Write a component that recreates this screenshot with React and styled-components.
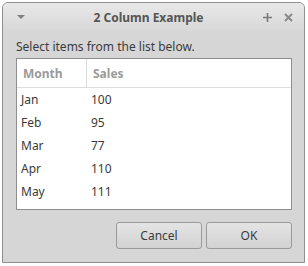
import React from 'react';
import styled, { createGlobalStyle } from 'styled-components';

const GlobalStyle = createGlobalStyle`
  html, body {
    margin: 0;
    padding: 0;
    background: #ffffff;
  }
  body {
    font-family: "Noto Sans", "Open Sans", "DejaVu Sans", sans-serif;
    font-size: 12px;
  }
`

const Page = styled.div`
  width: 308px;
  height: 266px;
  padding: 2px 3px 3px 2px;
  box-sizing: border-box;
`

const Window = styled.div`
  height: 100%;
  box-sizing: border-box;
  border: 1px solid #8f8f8f;
  border-radius: 6px 6px 0 0;
  background: #d6d6d6;
  display: flex;
  flex-direction: column;
  overflow: hidden;
`

const TitleBar = styled.div`
  height: 28px;
  flex-shrink: 0;
  display: grid;
  grid-template-columns: 40px 1fr 50px;
  align-items: center;
  background: linear-gradient(#e8e8e8, #d8d8d8);
`

const Title = styled.div`
  text-align: center;
  font-weight: bold;
  color: #555555;
  font-size: 12px;
`

const MenuArrow = styled.div`
  justify-self: start;
  margin-left: 14px;
  width: 0;
  height: 0;
  border-left: 4px solid transparent;
  border-right: 4px solid transparent;
  border-top: 4px solid #808080;
`

const Controls = styled.div`
  display: flex;
  justify-content: flex-end;
  gap: 12px;
  padding-right: 11px;
  color: #7a7a7a;
`

const Body = styled.div`
  flex: 1;
  display: flex;
  flex-direction: column;
  padding: 7px 12px 12px 13px;
`

const Prompt = styled.div`
  color: #3c3c3c;
  line-height: 18px;
  margin-bottom: 2px;
`

const ListBox = styled.div`
  background: #ffffff;
  border: 1px solid #8e8e8e;
  height: 152px;
  box-sizing: border-box;
`

const Row = styled.div`
  display: grid;
  grid-template-columns: 70px 1fr;
  height: ${p => (p.$header ? '28px' : '23px')};
  align-items: center;
  border-bottom: ${p => (p.$header ? '1px solid #dcdcdc' : 'none')};
`

const Cell = styled.div`
  padding-left: ${p => (p.$header ? '6px' : '4px')};
  height: 100%;
  display: flex;
  align-items: center;
  color: ${p => (p.$header ? '#9a9a9a' : '#3a3a3a')};
  font-weight: ${p => (p.$header ? 'bold' : 'normal')};
  border-right: ${p => (p.$divider ? '1px solid #dcdcdc' : 'none')};
`

const Buttons = styled.div`
  display: flex;
  justify-content: flex-end;
  gap: 4px;
  margin-top: 12px;
`

const Button = styled.button`
  width: 86px;
  height: 27px;
  font-family: inherit;
  font-size: 12px;
  color: #3c3c3c;
  background: linear-gradient(#e4e4e4, #d2d2d2);
  border: 1px solid #9a9a9a;
  border-radius: 3px;
  padding: 0;
`

const CloseIcon = () => (
  <svg width="9" height="9" viewBox="0 0 9 9">
    <path d="M1 1 L8 8 M8 1 L1 8" stroke="#8a8a8a" strokeWidth="2" />
  </svg>
)

const PlusIcon = () => (
  <svg width="9" height="9" viewBox="0 0 9 9">
    <path d="M4.5 0 V9 M0 4.5 H9" stroke="#7a7a7a" strokeWidth="1.6" />
  </svg>
)

const data = [
  ['Jan', '100'],
  ['Feb', '95'],
  ['Mar', '77'],
  ['Apr', '110'],
  ['May', '111'],
]

const App = () => (
  <>
    <GlobalStyle />
    <Page>
      <Window>
        <TitleBar>
          <MenuArrow />
          <Title>2 Column Example</Title>
          <Controls>
            <PlusIcon />
            <CloseIcon />
          </Controls>
        </TitleBar>
        <Body>
          <Prompt>Select items from the list below.</Prompt>
          <ListBox>
            <Row $header>
              <Cell $header $divider>Month</Cell>
              <Cell $header>Sales</Cell>
            </Row>
            {data.map(([m, s]) => (
              <Row key={m}>
                <Cell>{m}</Cell>
                <Cell>{s}</Cell>
              </Row>
            ))}
          </ListBox>
          <Buttons>
            <Button>Cancel</Button>
            <Button>OK</Button>
          </Buttons>
        </Body>
      </Window>
    </Page>
  </>
)

export default App;
